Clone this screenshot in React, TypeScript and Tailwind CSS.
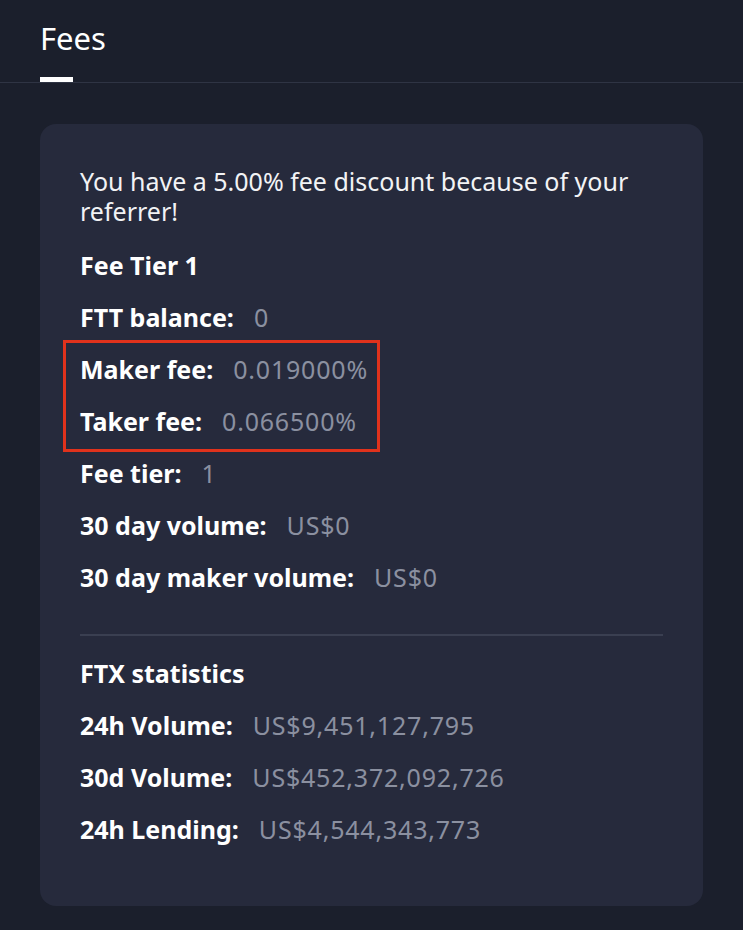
import React from "react";

const Row = ({ label, value }: { label: string; value?: string }) => (
  <div className="flex h-[52px] items-center">
    <span className="font-bold text-white">{label}</span>
    {value !== undefined && (
      <span className="ml-[20px] tracking-[0.8px] text-[#8b90a0]">{value}</span>
    )}
  </div>
);

export default function App() {
  return (
    <div
      className="min-h-[930px] w-[743px] bg-[#1b1f2c] text-[25px] text-white"
      style={{ fontFamily: "'Noto Sans', Lato, sans-serif" }}
    >
      <div className="border-b border-[#2f3444]">
        <div className="ml-[40px] inline-flex flex-col pt-[17px]">
          <span className="text-[31px] leading-[43px]">Fees</span>
          <div className="mt-[17px] h-[5px] w-[33px] bg-white" />
        </div>
      </div>
      <div className="mx-[40px] mt-[41px] rounded-[16px] bg-[#262a3c] px-[40px] pb-[50px] pt-[42px]">
        <p className="leading-[30px] text-[#f2f3f5]">
          You have a 5.00% fee discount because of your referrer!
        </p>
        <div className="mt-[14px]">
          <Row label="Fee Tier 1" />
          <Row label="FTT balance:" value="0" />
          <div className="relative">
            <div className="pointer-events-none absolute -left-[17px] -top-[4px] -bottom-[4px] w-[317px] border-[3px] border-[#e0321c]" />
            <Row label="Maker fee:" value="0.019000%" />
            <Row label="Taker fee:" value="0.066500%" />
          </div>
          <Row label="Fee tier:" value="1" />
          <Row label="30 day volume:" value="US$0" />
          <Row label="30 day maker volume:" value="US$0" />
        </div>
        <div className="mt-[30px] mb-[12px] h-[2px] bg-[#3a3f51]" />
        <Row label="FTX statistics" />
        <Row label="24h Volume:" value="US$9,451,127,795" />
        <Row label="30d Volume:" value="US$452,372,092,726" />
        <Row label="24h Lending:" value="US$4,544,343,773" />
      </div>
    </div>
  );
}
